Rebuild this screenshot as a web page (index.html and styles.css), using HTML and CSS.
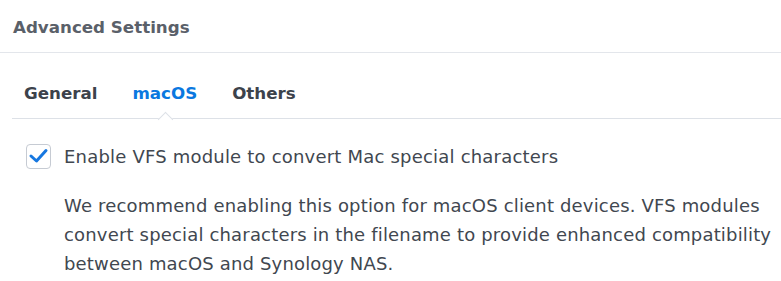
FILE: index.html
```html
<!DOCTYPE html>
<html lang="en">
<head>
    <meta charset="UTF-8">
    <title>Advanced Settings</title>
    <link rel="stylesheet" href="styles.css">
</head>
<body>
    <div class="panel">
        <div class="panel-header">Advanced Settings</div>
        <div class="tabs">
            <span class="tab">General</span>
            <span class="tab active">macOS</span>
            <span class="tab">Others</span>
        </div>
        <div class="content">
            <label class="check-row">
                <span class="checkbox">
                    <svg width="23" height="23" viewBox="0 0 23 23">
                        <path d="M4 11 L9.5 16 L19 5.5" fill="none" stroke="#1677e0" stroke-width="3" stroke-linecap="round" stroke-linejoin="round"/>
                    </svg>
                </span>
                <span>Enable VFS module to convert Mac special characters</span>
            </label>
            <p class="note">We recommend enabling this option for macOS client devices. VFS modules convert special characters in the filename to provide enhanced compatibility between macOS and Synology NAS.</p>
        </div>
    </div>
</body>
</html>
```

FILE: styles.css
```css
body {
    margin: 0;
    background: #ffffff;
    font-family: "DejaVu Sans", Verdana, sans-serif;
    color: #414750;
}

.panel {
    width: 781px;
}

.panel-header {
    height: 52px;
    padding-left: 13px;
    line-height: 54px;
    font-size: 16.7px;
    font-weight: bold;
    color: #5a6069;
    border-bottom: 1px solid #e3e6eb;
}

.tabs {
    display: flex;
    margin-left: 12px;
    height: 66px;
    align-items: center;
    padding-top: 14px;
    box-sizing: border-box;
    border-bottom: 1px solid #dde1e7;
}

.tab {
    position: relative;
    margin-left: 12px;
    margin-right: 23px;
    font-size: 16.7px;
    font-weight: bold;
    color: #3c424b;
}

.tab.active {
    color: #0a78e0;
}

/* little notch under the active tab */
.tab.active::after {
    content: "";
    position: absolute;
    left: 50%;
    bottom: -22px;
    width: 10px;
    height: 10px;
    margin-left: -5px;
    background: #ffffff;
    border-left: 1px solid #dde1e7;
    border-top: 1px solid #dde1e7;
    transform: rotate(45deg);
}

.content {
    padding: 25px 0 0 26px;
}

.check-row {
    display: flex;
    align-items: center;
    font-size: 18px;
    letter-spacing: 0.2px;
    color: #414750;
}

.checkbox {
    display: flex;
    align-items: center;
    justify-content: center;
    width: 23px;
    height: 23px;
    margin-right: 13px;
    border: 1px solid #c6cbd3;
    border-radius: 4px;
}

.note {
    margin: 22px 0 0 38px;
    font-size: 18px;
    letter-spacing: 0.17px;
    line-height: 29px;
    color: #414750;
}
```
